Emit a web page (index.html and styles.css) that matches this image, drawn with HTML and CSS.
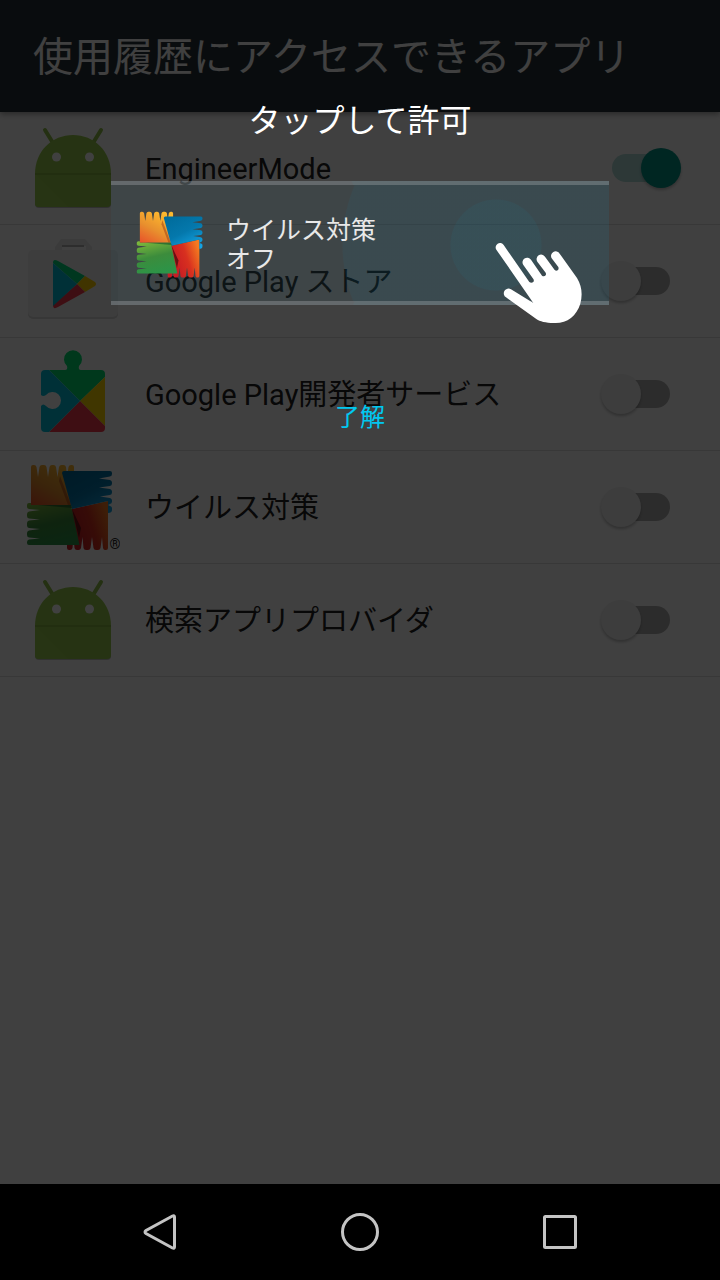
FILE: index.html
```
<!DOCTYPE html>
<html lang="ja">
<head>
  <meta charset="UTF-8">
  <meta name="viewport" content="width=device-width, initial-scale=1.0">
  <title>使用履歴にアクセスできるアプリ</title>
  <link rel="stylesheet" href="styles.css">
</head>
<body>
  <!-- shared icons -->
  <svg class="defs" width="0" height="0" aria-hidden="true">
    <defs>
      <linearGradient id="orange" x1="0" y1="1" x2="0.6" y2="0">
        <stop offset="0" stop-color="#e8502a"/><stop offset="0.5" stop-color="#e8902e"/><stop offset="1" stop-color="#fdb82e"/>
      </linearGradient>
      <linearGradient id="blue" x1="0.2" y1="0" x2="0.8" y2="1">
        <stop offset="0" stop-color="#006c9c"/><stop offset="0.5" stop-color="#0478ac"/><stop offset="1" stop-color="#14a4e4"/>
      </linearGradient>
      <linearGradient id="green" x1="0.2" y1="0" x2="0.5" y2="1">
        <stop offset="0" stop-color="#7cb83c"/><stop offset="0.5" stop-color="#3c8c3c"/><stop offset="1" stop-color="#2c9448"/>
      </linearGradient>
      <linearGradient id="red" x1="0" y1="0.7" x2="1" y2="0.3">
        <stop offset="0.2" stop-color="#c81c24"/><stop offset="0.6" stop-color="#d8301f"/><stop offset="1" stop-color="#f47a20"/>
      </linearGradient>
      <symbol id="android" viewBox="0 0 96 96">
        <path d="M11 84V56h76v28a4 4 0 0 1-4 4H15a4 4 0 0 1-4-4z" fill="#000" opacity=".25"/>
        <path d="M21 10l8 13M77 10l-8 13" stroke="#8fc04a" stroke-width="4" stroke-linecap="round"/>
        <path d="M11 54C11 31 28 15 49 15s38 16 38 39z" fill="#98cc4c"/>
        <path d="M11 53h76v30a4 4 0 0 1-4 4H15a4 4 0 0 1-4-4z" fill="#98cc4c"/>
        <path d="M11 54l33 33H15a4 4 0 0 1-4-4z" fill="#9ccf4f"/>
        <path d="M11 53h76v2H11z" fill="#86b842"/>
        <circle cx="32.500" cy="37" r="4.500" fill="#fff"/>
        <circle cx="65.500" cy="37" r="4.500" fill="#fff"/>
      </symbol>
      <symbol id="avg" viewBox="2 5 88 88">
        <path d="M7 46V8Q7 6 9 6H10Q12 6 12.500 8L14 18L15.500 8Q16 6 18 6H20Q22 6 22.500 8L24 18L25.500 8Q26 6 28 6H29.500Q31.500 6 32 8L33.500 18L35 8Q35.500 6 37.500 6H39.500Q41.500 6 42 8L43 18L44.500 8Q45 6 47 6H48Q50 6 50 8V46Z" fill="url(#orange)"/>
        <path d="M36 17l11 29h-3L35 22z" fill="#a84a18" opacity=".6"/>
        <path d="M43 80L48 50L84 42V89Q84 91 82 91H81Q79.500 91 79 89L78 78L76.500 89Q76 91 74 91H72Q70 91 69.500 89L68 78L66.500 89Q66 91 64 91H62Q60 91 59.500 89L58.500 78L57 89Q56.500 91 54.500 91H53Q51 91 50.500 89L49.500 78L48.500 89Q48 91 46 91H45Q43 91 43 89Z" fill="url(#red)"/>
        <path d="M48 50l9 19-2 10z" fill="#6c1014"/>
        <path d="M38 14Q38 12 40 12H86Q88 12 88 14V15Q88 17 86 17.500L75 19.500L86 21Q88 21.500 88 23.500V24.500Q88 26.500 86 27L75 28.500L86 30Q88 30.500 88 32.500V33.500Q88 35.500 86 36L76 37.500L86 39Q88 39.500 88 41.500V42.500Q88 44.500 86 45L84 46L86 47Q88 47.500 88 49V51Q88 54 84 54V42L48 50Z" fill="url(#blue)"/>
        <path d="M3 46Q3 44 5 44H7V46H47L55.500 86H5Q3 86 3 84V83Q3 81 5 80.500L16 79.500L5 78.500Q3 78 3 76V74Q3 72 5 71.500L16 70L5 69Q3 68.500 3 66.500V64Q3 62 5 61.500L16 60.500L5 59.500Q3 59 3 57V55Q3 53 5 52.500L16 51L5 50Q3 49.500 3 48Z" fill="url(#green)"/>
        <path d="M14 46h33l1 3z" fill="#1c5c2c" opacity=".7"/>
      </symbol>
    </defs>
  </svg>

  <div class="screen">
    <header class="app-bar">
      <h1>使用履歴にアクセスできるアプリ</h1>
    </header>

    <ul class="app-list">
      <li class="app-row">
        <svg class="app-icon"><use href="#android"/></svg>
        <label class="app-name" for="app1">EngineerMode</label>
        <input class="switch" type="checkbox" id="app1" checked>
      </li>
      <li class="app-row">
        <svg class="app-icon" viewBox="0 0 96 96">
          <path d="M31 18v-4l6-8h24l7 8v4h-6v-5H38v5z" fill="#ececec"/>
          <path d="M38 13h22" stroke="#b4b4b4" stroke-width="2"/>
          <rect x="4" y="19" width="90" height="67" rx="5" fill="#000" opacity=".15"/>
          <rect x="4" y="17" width="90" height="67" rx="5" fill="#f2f2f2"/>
          <path d="M29 30q0-5 5-2l27 15-8 8z" fill="#00dc7c"/>
          <path d="M61 43l10 6q2 2 0 4l-10 6-8-8z" fill="#ffd000"/>
          <path d="M29 72q0 5 5 2l27-15-8-8z" fill="#f83a4c"/>
          <path d="M29 30v43l24-22z" fill="#00c0dc"/>
        </svg>
        <label class="app-name" for="app2">Google Play ストア</label>
        <input class="switch" type="checkbox" id="app2">
      </li>
      <li class="app-row">
        <svg class="app-icon" viewBox="0 0 96 96">
          <path d="M25 24h16q3 0 2-4a9 9 0 1 1 12 0q-1 4 2 4h20q4 0 4 4v3L56 55z" fill="#00e070"/>
          <path d="M81 31v49L56 55z" fill="#ffd800"/>
          <path d="M81 80v2q0 4-4 4H25l31-31z" fill="#f83a4c"/>
          <path d="M25 24l31 31-31 31h-4q-4 0-4-4V60q2-3 5 0a8.500 8.500 0 1 0 0-11q-3 2-5 0V28q0-4 4-4z" fill="#00c0dc"/>
        </svg>
        <label class="app-name" for="app3">Google Play開発者サービス</label>
        <input class="switch" type="checkbox" id="app3">
      </li>
      <li class="app-row">
        <svg class="app-icon" viewBox="0 0 96 96">
          <use href="#avg" x="2" y="5" width="88" height="88"/>
          <text class="mark" x="91" y="90" text-anchor="middle">®</text>
        </svg>
        <label class="app-name" for="app4">ウイルス対策</label>
        <input class="switch" type="checkbox" id="app4">
      </li>
      <li class="app-row">
        <svg class="app-icon"><use href="#android"/></svg>
        <label class="app-name" for="app5">検索アプリプロバイダ</label>
        <input class="switch" type="checkbox" id="app5">
      </li>
    </ul>

    <div class="overlay">
      <h2 class="overlay-title">タップして許可</h2>
      <div class="hint">
        <svg class="hint-icon"><use href="#avg"/></svg>
        <p class="hint-text">ウイルス対策<br>オフ</p>
        <svg class="hand" viewBox="220 210 270 252">
          <path fill="#fff" d="M227 236A13 13 0 0 1 249 222L326 333Q332 338 338 333Q341 329 338 324L308 282A13 13 0 0 1 331 266L364 314Q370 318 375 313Q377 309 375 305L350 272A13 13 0 0 1 373 257L402 297Q407 302 412 297Q415 293 413 288L393 262A13 13 0 0 1 417 248L469 321C484 345 486 372 479 398C468 434 440 456 405 456C380 457 357 452 348 445L256 379A14 14 0 0 1 271 355L338 396Z"/>
        </svg>
      </div>
      <button class="ok" type="button">了解</button>
    </div>
  </div>

  <nav class="nav-bar">
    <button type="button" aria-label="戻る">
      <svg viewBox="0 0 40 40"><path d="M34.500 5v30q0 2-2 1L6 21.500q-2-1.500 0-3L32.500 4q2-1 2 1z"/></svg>
    </button>
    <button type="button" aria-label="ホーム">
      <svg viewBox="0 0 40 40"><circle cx="20" cy="20" r="17.500"/></svg>
    </button>
    <button type="button" aria-label="履歴">
      <svg viewBox="0 0 40 40"><rect x="4.500" y="4.500" width="31" height="31" rx="1"/></svg>
    </button>
  </nav>
</body>
</html>
```

FILE: styles.css
```
* {
  box-sizing: border-box;
  margin: 0;
  padding: 0;
}

body {
  min-height: 100vh;
  display: flex;
  flex-direction: column;
  background: #000;
  font-family: Roboto, "Noto Sans CJK JP", sans-serif;
}

button {
  background: none;
  border: none;
  font-family: inherit;
  cursor: pointer;
}

.defs { position: absolute; }

.screen {
  position: relative;
  flex: 1;
  background: #fff;
}

/* app bar */
.app-bar {
  display: flex;
  align-items: center;
  height: 112px;
  padding: 4px 33px 0;
  background: #263238;
  box-shadow: 0 2px 6px rgba(0, 0, 0, 0.4);
}
.app-bar h1 {
  color: #fff;
  font-size: 40px;
  font-weight: 400;
  line-height: 56px;
}

/* app list */
.app-list { list-style: none; }
.app-row {
  display: flex;
  align-items: center;
  gap: 25px;
  height: 113px;
  padding: 0 39px 0 24px;
  border-bottom: 1px solid #e0e0e0;
}
.app-icon {
  width: 96px;
  height: 96px;
  flex-shrink: 0;
}
.app-name {
  flex: 1;
  padding-top: 2px;
  color: #212121;
  font-size: 29px;
  line-height: 40px;
}
.mark {
  font-size: 14px;
  fill: #222;
}

/* switch */
.switch {
  appearance: none;
  display: grid;
  align-items: center;
  width: 80px;
  height: 40px;
  cursor: pointer;
}
.switch::before,
.switch::after {
  content: "";
  grid-area: 1 / 1;
}
.switch::before {
  height: 28px;
  margin: 0 11px;
  border-radius: 14px;
  background: #b0b0b0;
}
.switch::after {
  width: 40px;
  height: 40px;
  border-radius: 50%;
  background: #f1f1f1;
  box-shadow: 0 2px 3px rgba(0, 0, 0, 0.25);
}
.switch:checked::before { background: #b2dfdb; }
.switch:checked::after {
  justify-self: end;
  background: #009688;
}

/* overlay */
.overlay {
  position: absolute;
  inset: 0;
  display: flex;
  flex-direction: column;
  align-items: center;
  padding: 100px 111px 0;
  background: rgba(0, 0, 0, 0.75);
}
.overlay-title {
  color: #fff;
  font-size: 32px;
  font-weight: 400;
  line-height: 42px;
}
.hint {
  position: relative;
  display: flex;
  align-items: center;
  gap: 22px;
  width: 100%;
  height: 124px;
  margin-top: 39px;
  padding: 4px 25px 0;
  border: solid rgba(180, 184, 186, 0.32);
  border-width: 4px 0;
  background:
    radial-gradient(circle at right 113px top 60px, rgba(0, 160, 205, 0.06) 45px, transparent 46px),
    radial-gradient(circle at right 113px top 60px, rgba(0, 150, 205, 0.06) 153px, transparent 154px),
    rgba(50, 110, 120, 0.12);
}
.hint-icon {
  width: 68px;
  height: 68px;
}
.hint-text {
  color: #e8e8e8;
  font-size: 25px;
  line-height: 29px;
}
.hand {
  position: absolute;
  top: 56px;
  right: 25px;
  width: 90px;
  height: 84px;
}
.ok {
  margin-top: 89px;
  padding: 0 24px;
  color: #00c8f0;
  font-size: 25px;
  line-height: 48px;
}

/* navigation bar */
.nav-bar {
  display: flex;
  height: 96px;
  padding: 0 60px;
  background: #000;
}
.nav-bar button {
  flex: 1;
  display: flex;
  align-items: center;
  justify-content: center;
}
.nav-bar svg {
  width: 40px;
  height: 40px;
  fill: none;
  stroke: #c4c4c4;
  stroke-width: 3;
}
```
